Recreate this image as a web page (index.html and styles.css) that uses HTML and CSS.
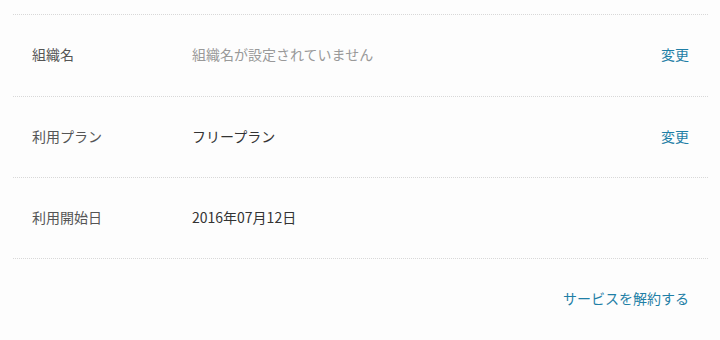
FILE: index.html
```html
<!DOCTYPE html>
<html lang="ja">
<head>
    <meta charset="UTF-8">
    <meta name="viewport" content="width=device-width, initial-scale=1.0">
    <title>アカウント設定</title>
    <link rel="stylesheet" href="styles.css">
</head>
<body>
    <div class="settings">
        <div class="row">
            <div class="label">組織名</div>
            <div class="value empty">組織名が設定されていません</div>
            <a class="link" href="#">変更</a>
        </div>
        <div class="row">
            <div class="label">利用プラン</div>
            <div class="value">フリープラン</div>
            <a class="link" href="#">変更</a>
        </div>
        <div class="row">
            <div class="label">利用開始日</div>
            <div class="value">2016年07月12日</div>
        </div>
        <div class="footer">
            <a class="link" href="#">サービスを解約する</a>
        </div>
    </div>
</body>
</html>
```

FILE: styles.css
```css
body {
    margin: 0;
    padding: 14px 12px 0 13px;
    background-color: #fdfdfd;
    font-family: "Noto Sans CJK JP", "Noto Sans", sans-serif;
    font-size: 14px;
    color: #333;
}
.settings {
    width: 695px;
}
.row {
    box-sizing: border-box;
    display: grid;
    grid-template-columns: 160px 1fr auto;
    align-items: center;
    height: 81px;
    padding: 0 19px 3px;
    border-top: 1px dotted #d8d8d8;
}
.row:first-child {
    height: 82px;
}
.label {
    color: #555;
}
.value {
    color: #333;
}
.value.empty {
    color: #999;
}
.link {
    color: #1f7fa6;
    text-decoration: none;
}
.footer {
    border-top: 1px dotted #d8d8d8;
    padding: 29px 19px 0;
    text-align: right;
}
```
